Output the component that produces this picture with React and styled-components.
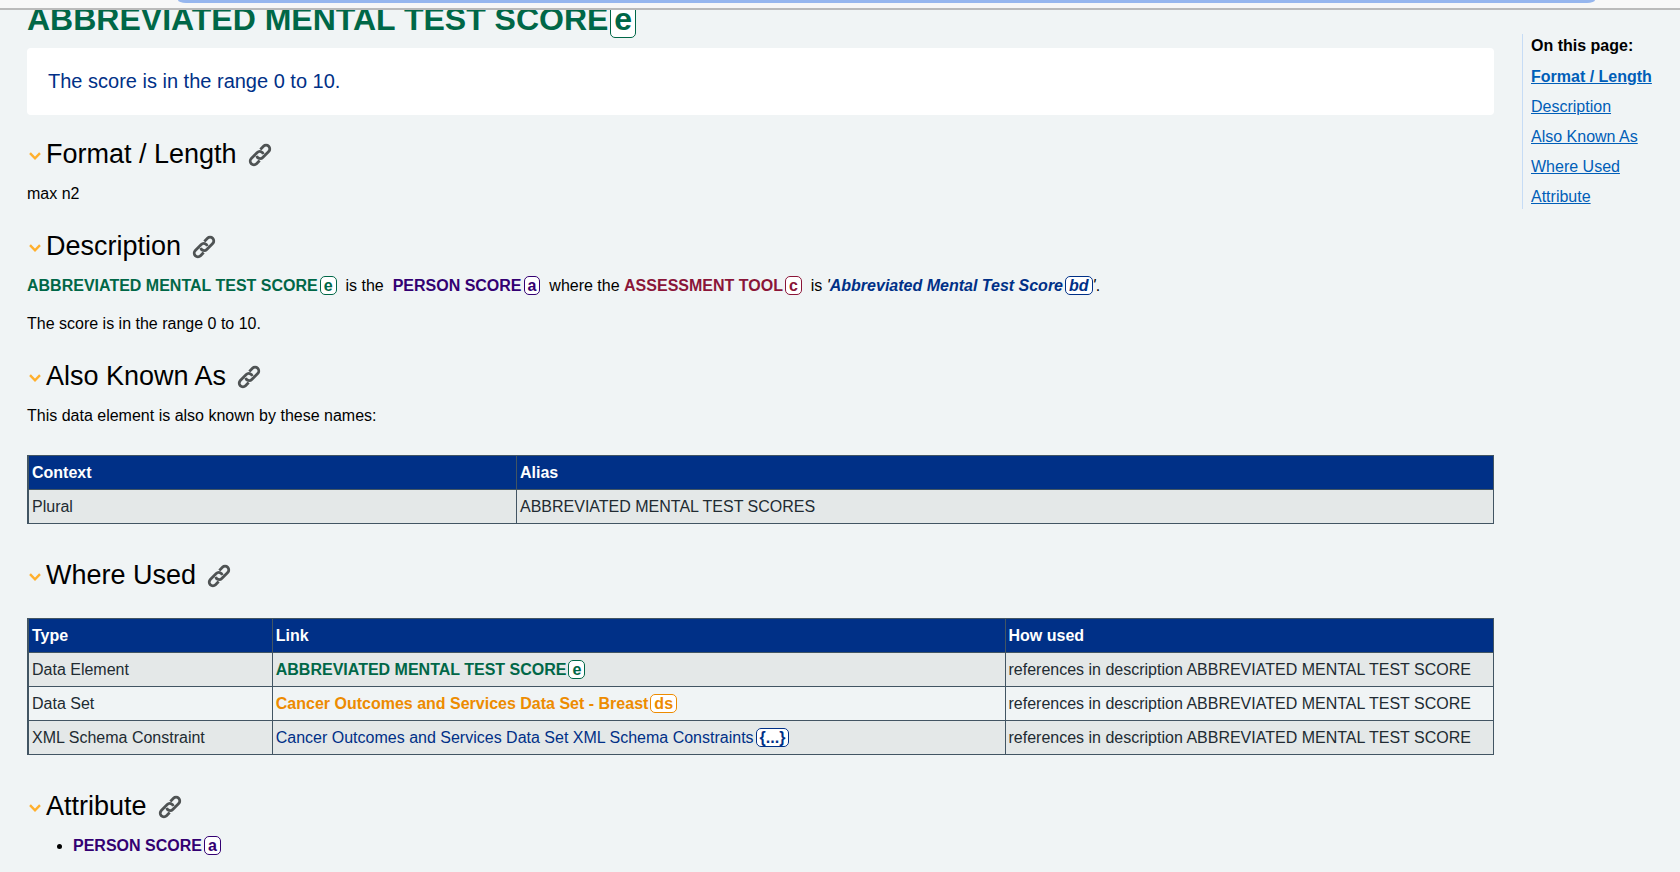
import React from 'react';
import styled, { createGlobalStyle } from 'styled-components';

const GlobalStyle = createGlobalStyle`
  *, *::before, *::after { box-sizing: border-box; }
  html { background: #f0f4f5; }
  body {
    margin: 0;
    background: #f0f4f5;
    color: #000;
    font: 16px/24px "Liberation Sans", Arial, sans-serif;
  }
`;

const TopBar = styled.header`
  position: sticky;
  top: 0;
  z-index: 1;
  height: 10px;
  padding: 0 85px 0 178px;
  background: #f7f7f7;
  border-bottom: 2px solid #bababa;
`;

const AddressBar = styled.div`
  height: 3px;
  background: #96b6ee;
  border-radius: 0 0 8px 8px / 0 0 3px 3px;
`;

const Page = styled.div`
  display: flex;
  align-items: flex-start;
  gap: 28px;
  padding-left: 27px;
`;

const Article = styled.main`
  flex: 1;
  min-width: 0;
  margin-top: -9px;
`;

const tones = {
  element: '#006747',
  attribute: '#330072',
  classItem: '#8a1538',
  business: '#003087',
  dataSet: '#ed8b00',
};

const Term = styled.a`
  color: ${({ $tone }) => tones[$tone]};
  font-weight: ${({ $plain }) => ($plain ? 400 : 700)};
  text-decoration: none;
`;

const Badge = styled.span`
  margin-left: 2px;
  padding: 0 3px;
  border: 1px solid currentColor;
  border-radius: 5px;
  background: #fff;
  font-weight: 700;
`;

const Title = styled.h1`
  margin: 0 0 11px;
  font-size: 32px;
  line-height: 36px;
`;

const Summary = styled.div`
  margin-bottom: 23px;
  padding: 21px;
  border-radius: 4px;
  background: #fff;
  color: #003087;
  font-size: 20px;
  line-height: 25px;
`;

const Panel = styled.details`
  padding-bottom: 12px;
`;

const PanelHead = styled.summary`
  display: flex;
  align-items: center;
  gap: 5px;
  margin-bottom: 12px;
  padding-left: 2px;
  list-style: none;
  cursor: pointer;
  &::-webkit-details-marker { display: none; }
`;

const Chevron = styled.svg`
  width: 12px;
  height: 8px;
  margin-top: 4px;
  fill: none;
  stroke: #ffb02e;
  stroke-width: 2.4;
`;

const Heading = styled.h2`
  margin: 0 6px 0 0;
  font-size: 27px;
  font-weight: 400;
  line-height: 32px;
`;

const Anchor = styled.a`
  display: flex;
  margin-top: 2px;
  color: #4f5354;
`;

const ChainIcon = styled.svg`
  width: 24px;
  height: 24px;
  fill: none;
  stroke: currentColor;
  stroke-width: 2.8;
`;

const Text = styled.p`
  margin: 0 0 12px;
  & + & { margin-top: 14px; }
`;

const Table = styled.table`
  width: 100%;
  margin: 27px 0 23px;
  border-collapse: collapse;
  table-layout: fixed;
  border: 1px solid #425563;
  border-left-width: 2px;
  color: #212b32;
`;

const Th = styled.th`
  width: ${({ $width }) => $width};
  height: 34px;
  padding: 4px 3px;
  border: 1px solid #425563;
  background: #003087;
  color: #fff;
  text-align: left;
`;

const Td = styled.td`
  height: 34px;
  padding: 4px 3px;
  border: 1px solid #425563;
`;

const Row = styled.tr`
  &:nth-child(odd) { background: #e4e8e8; }
`;

const List = styled.ul`
  margin: 0;
  padding-left: 46px;
`;

const Contents = styled.nav`
  flex: 0 0 158px;
  margin-top: 24px;
  padding-left: 8px;
  border-left: 1px solid #c6dcf5;
`;

const ContentsTitle = styled.strong`
  display: block;
  margin-bottom: 7px;
`;

const ContentsList = styled.ul`
  display: flex;
  flex-direction: column;
  gap: 6px;
  margin: 0;
  padding: 0;
  list-style: none;
`;

const ContentsLink = styled.a`
  color: #005eb8;
  font-weight: ${({ $current }) => ($current ? 700 : 400)};
`;

function TermLink({ tone, badge, plain, children }) {
  return (
    <Term href="#term" $tone={tone} $plain={plain}>
      {children}
      <Badge>{badge}</Badge>
    </Term>
  );
}

function Section({ id, title, children }) {
  return (
    <Panel id={id} open>
      <PanelHead>
        <Chevron viewBox="0 0 12 8" aria-hidden="true">
          <path d="M1 1.2 L6 6.3 L11 1.2" />
        </Chevron>
        <Heading>{title}</Heading>
        <Anchor href={`#${id}`} aria-label={`Link to ${title}`}>
          <ChainIcon viewBox="-12 -12 24 24" aria-hidden="true">
            <g transform="rotate(-45)">
              <path d="M-3.1 -1.67 A3.7 3.7 0 0 0 0.2 3.7 H8.6 A3.7 3.7 0 0 0 8.6 -3.7 H4.2" />
              <path d="M3.1 1.67 A3.7 3.7 0 0 0 -0.2 -3.7 H-8.6 A3.7 3.7 0 0 0 -8.6 3.7 H-4.2" />
            </g>
          </ChainIcon>
        </Anchor>
      </PanelHead>
      {children}
    </Panel>
  );
}

function DataTable({ columns, rows }) {
  return (
    <Table>
      <thead>
        <tr>
          {columns.map(([label, width]) => (
            <Th key={label} scope="col" $width={width}>{label}</Th>
          ))}
        </tr>
      </thead>
      <tbody>
        {rows.map((cells, r) => (
          <Row key={r}>
            {cells.map((cell, c) => <Td key={c}>{cell}</Td>)}
          </Row>
        ))}
      </tbody>
    </Table>
  );
}

const NAME = 'ABBREVIATED MENTAL TEST SCORE';
const USED = `references in description ${NAME}`;

const contents = [
  ['format', 'Format / Length'],
  ['description', 'Description'],
  ['aliases', 'Also Known As'],
  ['where-used', 'Where Used'],
  ['attribute', 'Attribute'],
];

export default function App() {
  return (
    <>
      <GlobalStyle />
      <TopBar><AddressBar /></TopBar>
      <Page>
        <Article>
          <Title><TermLink tone="element" badge="e">{NAME}</TermLink></Title>
          <Summary>The score is in the range 0 to 10.</Summary>

          <Section id="format" title="Format / Length">
            <Text>max n2</Text>
          </Section>

          <Section id="description" title="Description">
            <Text>
              <TermLink tone="element" badge="e">{NAME}</TermLink>
              {'\u00a0 is the \u00a0'}
              <TermLink tone="attribute" badge="a">PERSON SCORE</TermLink>
              {'\u00a0 where the '}
              <TermLink tone="classItem" badge="c">ASSESSMENT TOOL</TermLink>
              {'\u00a0 is '}
              <em>
                {"'"}
                <TermLink tone="business" badge="bd">Abbreviated Mental Test Score</TermLink>
                {"'"}
              </em>
              .
            </Text>
            <Text>The score is in the range 0 to 10.</Text>
          </Section>

          <Section id="aliases" title="Also Known As">
            <Text>This data element is also known by these names:</Text>
            <DataTable
              columns={[['Context', '33.333%'], ['Alias', 'auto']]}
              rows={[['Plural', 'ABBREVIATED MENTAL TEST SCORES']]}
            />
          </Section>

          <Section id="where-used" title="Where Used">
            <DataTable
              columns={[['Type', '16.667%'], ['Link', '50%'], ['How used', 'auto']]}
              rows={[
                ['Data Element', <TermLink tone="element" badge="e">{NAME}</TermLink>, USED],
                [
                  'Data Set',
                  <TermLink tone="dataSet" badge="ds">
                    Cancer Outcomes and Services Data Set - Breast
                  </TermLink>,
                  USED,
                ],
                [
                  'XML Schema Constraint',
                  <TermLink tone="business" badge="{...}" plain>
                    Cancer Outcomes and Services Data Set XML Schema Constraints
                  </TermLink>,
                  USED,
                ],
              ]}
            />
          </Section>

          <Section id="attribute" title="Attribute">
            <List>
              <li><TermLink tone="attribute" badge="a">PERSON SCORE</TermLink></li>
            </List>
          </Section>
        </Article>

        <Contents aria-label="On this page">
          <ContentsTitle>On this page:</ContentsTitle>
          <ContentsList>
            {contents.map(([id, label], i) => (
              <li key={id}>
                <ContentsLink href={`#${id}`} $current={i === 0}>{label}</ContentsLink>
              </li>
            ))}
          </ContentsList>
        </Contents>
      </Page>
    </>
  );
}
